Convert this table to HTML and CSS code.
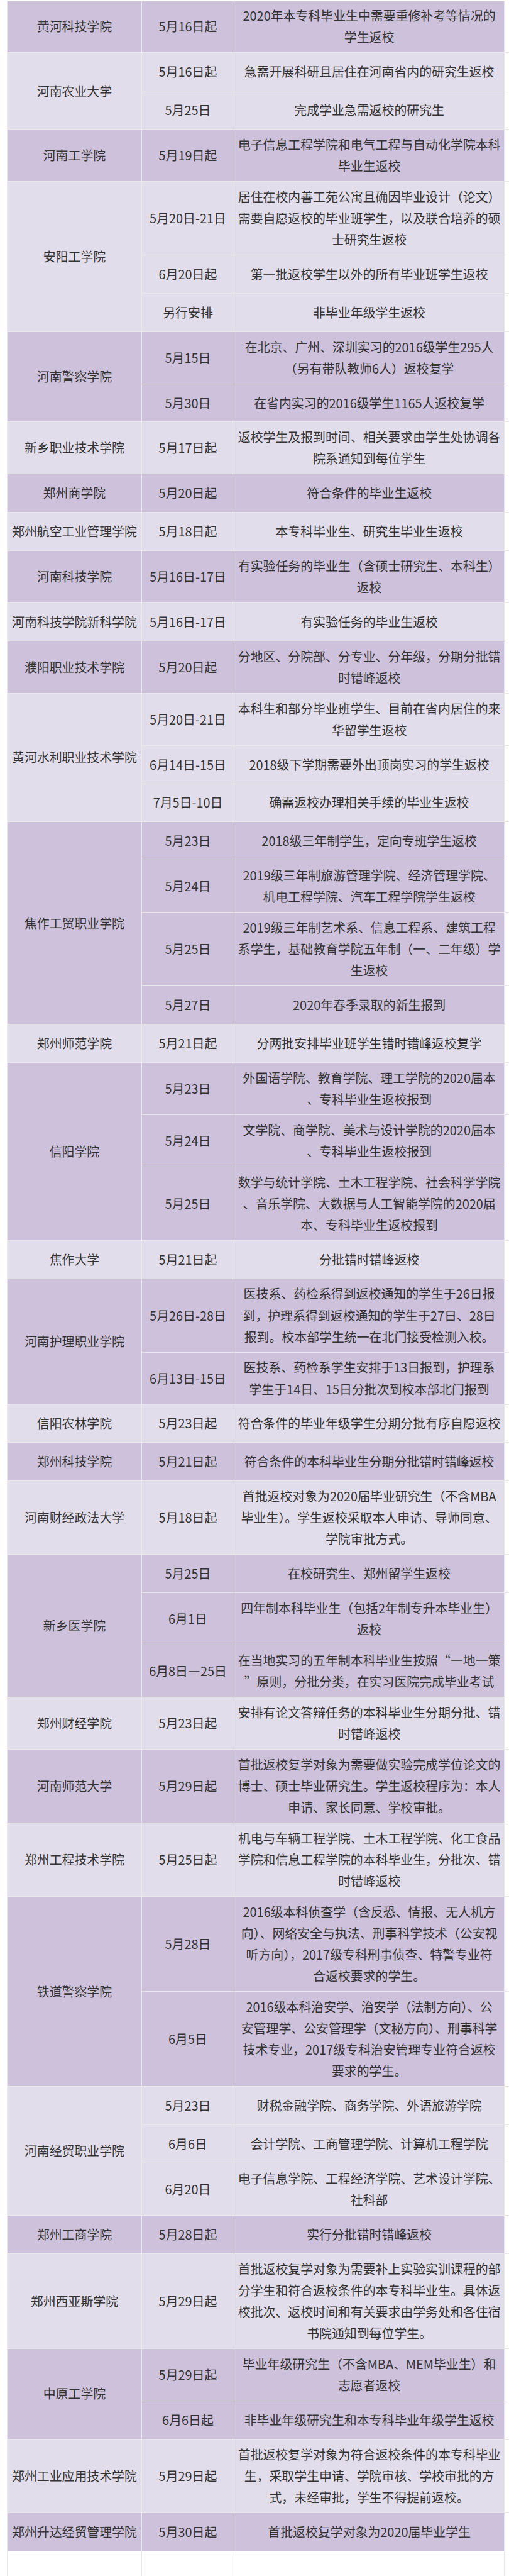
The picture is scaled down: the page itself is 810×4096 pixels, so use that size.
FILE: index.html
```html
<!DOCTYPE html>
<html lang="zh-CN">
<head>
<meta charset="utf-8">
<title>河南高校返校时间表</title>
<link rel="stylesheet" href="styles.css">
</head>
<body>
<table class="sched">
<colgroup><col class="c1"><col class="c2"><col class="c3"><col class="c4"></colgroup>
<tbody>
<tr class="d"><td>黄河科技学院</td><td>5月16日起</td><td>2020年本专科毕业生中需要重修补考等情况的<br>学生返校</td><td class="x"></td></tr>

<tr class="l"><td rowspan="2">河南农业大学</td><td>5月16日起</td><td>急需开展科研且居住在河南省内的研究生返校</td><td class="x"></td></tr>
<tr class="l"><td>5月25日</td><td>完成学业急需返校的研究生</td><td class="x"></td></tr>

<tr class="d"><td>河南工学院</td><td>5月19日起</td><td>电子信息工程学院和电气工程与自动化学院本科<br>毕业生返校</td><td class="x"></td></tr>

<tr class="l"><td rowspan="3">安阳工学院</td><td>5月20日-21日</td><td>居住在校内善工苑公寓且确因毕业设计（论文）<br>需要自愿返校的毕业班学生，以及联合培养的硕<br>士研究生返校</td><td class="x"></td></tr>
<tr class="l"><td>6月20日起</td><td>第一批返校学生以外的所有毕业班学生返校</td><td class="x"></td></tr>
<tr class="l"><td>另行安排</td><td>非毕业年级学生返校</td><td class="x"></td></tr>

<tr class="d"><td rowspan="2">河南警察学院</td><td>5月15日</td><td>在北京、广州、深圳实习的2016级学生295人<br>（另有带队教师6人）返校复学</td><td class="x"></td></tr>
<tr class="d"><td>5月30日</td><td>在省内实习的2016级学生1165人返校复学</td><td class="x"></td></tr>

<tr class="l"><td>新乡职业技术学院</td><td>5月17日起</td><td>返校学生及报到时间、相关要求由学生处协调各<br>院系通知到每位学生</td><td class="x"></td></tr>

<tr class="d"><td>郑州商学院</td><td>5月20日起</td><td>符合条件的毕业生返校</td><td class="x"></td></tr>

<tr class="l"><td>郑州航空工业管理学院</td><td>5月18日起</td><td>本专科毕业生、研究生毕业生返校</td><td class="x"></td></tr>

<tr class="d"><td>河南科技学院</td><td>5月16日-17日</td><td>有实验任务的毕业生（含硕士研究生、本科生）<br>返校</td><td class="x"></td></tr>

<tr class="l"><td>河南科技学院新科学院</td><td>5月16日-17日</td><td>有实验任务的毕业生返校</td><td class="x"></td></tr>

<tr class="d"><td>濮阳职业技术学院</td><td>5月20日起</td><td>分地区、分院部、分专业、分年级，分期分批错<br>时错峰返校</td><td class="x"></td></tr>

<tr class="l"><td rowspan="3">黄河水利职业技术学院</td><td>5月20日-21日</td><td>本科生和部分毕业班学生、目前在省内居住的来<br>华留学生返校</td><td class="x"></td></tr>
<tr class="l"><td>6月14日-15日</td><td>2018级下学期需要外出顶岗实习的学生返校</td><td class="x"></td></tr>
<tr class="l"><td>7月5日-10日</td><td>确需返校办理相关手续的毕业生返校</td><td class="x"></td></tr>

<tr class="d"><td rowspan="4">焦作工贸职业学院</td><td>5月23日</td><td>2018级三年制学生，定向专班学生返校</td><td class="x"></td></tr>
<tr class="d"><td>5月24日</td><td>2019级三年制旅游管理学院、经济管理学院、<br>机电工程学院、汽车工程学院学生返校</td><td class="x"></td></tr>
<tr class="d"><td>5月25日</td><td>2019级三年制艺术系、信息工程系、建筑工程<br>系学生，基础教育学院五年制（一、二年级）学<br>生返校</td><td class="x"></td></tr>
<tr class="d"><td>5月27日</td><td>2020年春季录取的新生报到</td><td class="x"></td></tr>

<tr class="l"><td>郑州师范学院</td><td>5月21日起</td><td>分两批安排毕业班学生错时错峰返校复学</td><td class="x"></td></tr>

<tr class="d"><td rowspan="3">信阳学院</td><td>5月23日</td><td>外国语学院、教育学院、理工学院的2020届本<br>、专科毕业生返校报到</td><td class="x"></td></tr>
<tr class="d"><td>5月24日</td><td>文学院、商学院、美术与设计学院的2020届本<br>、专科毕业生返校报到</td><td class="x"></td></tr>
<tr class="d"><td>5月25日</td><td>数学与统计学院、土木工程学院、社会科学学院<br>、音乐学院、大数据与人工智能学院的2020届<br>本、专科毕业生返校报到</td><td class="x"></td></tr>

<tr class="l"><td>焦作大学</td><td>5月21日起</td><td>分批错时错峰返校</td><td class="x"></td></tr>

<tr class="d"><td rowspan="2">河南护理职业学院</td><td>5月26日-28日</td><td>医技系、药检系得到返校通知的学生于26日报<br>到，护理系得到返校通知的学生于27日、28日<br>报到。校本部学生统一在北门接受检测入校。</td><td class="x"></td></tr>
<tr class="d"><td>6月13日-15日</td><td>医技系、药检系学生安排于13日报到，护理系<br>学生于14日、15日分批次到校本部北门报到</td><td class="x"></td></tr>

<tr class="l"><td>信阳农林学院</td><td>5月23日起</td><td>符合条件的毕业年级学生分期分批有序自愿返校</td><td class="x"></td></tr>

<tr class="d"><td>郑州科技学院</td><td>5月21日起</td><td>符合条件的本科毕业生分期分批错时错峰返校</td><td class="x"></td></tr>

<tr class="l"><td>河南财经政法大学</td><td>5月18日起</td><td>首批返校对象为2020届毕业研究生（不含MBA<br>毕业生）。学生返校采取本人申请、导师同意、<br>学院审批方式。</td><td class="x"></td></tr>

<tr class="d"><td rowspan="3">新乡医学院</td><td>5月25日</td><td>在校研究生、郑州留学生返校</td><td class="x"></td></tr>
<tr class="d"><td>6月1日</td><td>四年制本科毕业生（包括2年制专升本毕业生）<br>返校</td><td class="x"></td></tr>
<tr class="d"><td>6月8日—25日</td><td>在当地实习的五年制本科毕业生按照“一地一策<br>”原则，分批分类，在实习医院完成毕业考试</td><td class="x"></td></tr>

<tr class="l"><td>郑州财经学院</td><td>5月23日起</td><td>安排有论文答辩任务的本科毕业生分期分批、错<br>时错峰返校</td><td class="x"></td></tr>

<tr class="d"><td>河南师范大学</td><td>5月29日起</td><td>首批返校复学对象为需要做实验完成学位论文的<br>博士、硕士毕业研究生。学生返校程序为：本人<br>申请、家长同意、学校审批。</td><td class="x"></td></tr>

<tr class="l"><td>郑州工程技术学院</td><td>5月25日起</td><td>机电与车辆工程学院、土木工程学院、化工食品<br>学院和信息工程学院的本科毕业生，分批次、错<br>时错峰返校</td><td class="x"></td></tr>

<tr class="d"><td rowspan="2">铁道警察学院</td><td>5月28日</td><td>2016级本科侦查学（含反恐、情报、无人机方<br>向）、网络安全与执法、刑事科学技术（公安视<br>听方向），2017级专科刑事侦查、特警专业符<br>合返校要求的学生。</td><td class="x"></td></tr>
<tr class="d"><td>6月5日</td><td>2016级本科治安学、治安学（法制方向）、公<br>安管理学、公安管理学（文秘方向）、刑事科学<br>技术专业，2017级专科治安管理专业符合返校<br>要求的学生。</td><td class="x"></td></tr>

<tr class="l"><td rowspan="3">河南经贸职业学院</td><td>5月23日</td><td>财税金融学院、商务学院、外语旅游学院</td><td class="x"></td></tr>
<tr class="l"><td>6月6日</td><td>会计学院、工商管理学院、计算机工程学院</td><td class="x"></td></tr>
<tr class="l"><td>6月20日</td><td>电子信息学院、工程经济学院、艺术设计学院、<br>社科部</td><td class="x"></td></tr>

<tr class="d"><td>郑州工商学院</td><td>5月28日起</td><td>实行分批错时错峰返校</td><td class="x"></td></tr>

<tr class="l"><td>郑州西亚斯学院</td><td>5月29日起</td><td>首批返校复学对象为需要补上实验实训课程的部<br>分学生和符合返校条件的本专科毕业生。具体返<br>校批次、返校时间和有关要求由学务处和各住宿<br>书院通知到每位学生。</td><td class="x"></td></tr>

<tr class="d"><td rowspan="2">中原工学院</td><td>5月29日起</td><td>毕业年级研究生（不含MBA、MEM毕业生）和<br>志愿者返校</td><td class="x"></td></tr>
<tr class="d"><td>6月6日起</td><td>非毕业年级研究生和本专科毕业年级学生返校</td><td class="x"></td></tr>

<tr class="l"><td>郑州工业应用技术学院</td><td>5月29日起</td><td>首批返校复学对象为符合返校条件的本专科毕业<br>生，采取学生申请、学院审核、学校审批的方<br>式，未经审批，学生不得提前返校。</td><td class="x"></td></tr>

<tr class="d"><td>郑州升达经贸管理学院</td><td>5月30日起</td><td>首批返校复学对象为2020届毕业学生</td><td class="x"></td></tr>

<tr class="w"><td></td><td></td><td></td><td class="x"></td></tr>
</tbody>
</table>
</body>
</html>
```

FILE: styles.css
```css
html, body {
  margin: 0;
  padding: 0;
  background: #ffffff;
  overflow-x: hidden;
}

.sched {
  table-layout: fixed;
  width: 833.5px;
  border-collapse: separate;
  border-spacing: 1.5px;
  background: #e8e8e8;
  margin: 0.5px 0 0 10.9px;
  font-family: "Noto Sans CJK SC", "Microsoft YaHei", sans-serif;
  font-size: 19.9px;
  line-height: 34.1px;
  color: #333333;
}

.c1 { width: 212.5px; }
.c2 { width: 145.5px; }
.c3 { width: 428px; }
.c4 { width: 40px; }

.sched tr {
  height: 59.8px;
}

.sched td {
  box-sizing: border-box;
  padding: 6.9px 3px;
  text-align: center;
  vertical-align: middle;
  white-space: nowrap;
}

.sched tr.d td {
  background: #cec1dc;
}

.sched tr.l td {
  background: #e2ddeb;
}

.sched tr.w td {
  background: #ffffff;
}

.sched td.x,
.sched tr.d td.x,
.sched tr.l td.x {
  background: #ffffff;
}
```
